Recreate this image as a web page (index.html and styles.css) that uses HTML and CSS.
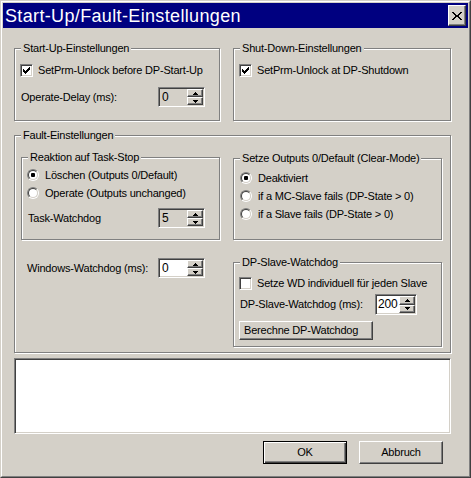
FILE: index.html
```html
<!DOCTYPE html>
<html lang="de">
<head>
<meta charset="utf-8">
<title>Start-Up/Fault-Einstellungen</title>
<link rel="stylesheet" href="styles.css">
</head>
<body>
<div class="window">
  <div class="frame">
    <div class="titlebar">
      <span class="title">Start-Up/Fault-Einstellungen</span>
      <span class="close"><svg width="10" height="8" viewBox="0 0 10 8"><path d="M0 0h2v1H0zM8 0h2v1H8zM1 1h2v1H1zM7 1h2v1H7zM2 2h2v1H2zM6 2h2v1H6zM3 3h4v1H3zM3 4h4v1H3zM2 5h2v1H2zM6 5h2v1H6zM1 6h2v1H1zM7 6h2v1H7zM0 7h2v1H0zM8 7h2v1H8z"/></svg></span>
    </div>
    <div class="content">
      <div class="row-top">
        <div class="group g-startup">
          <div class="legend">Start-Up-Einstellungen</div>
          <div class="check-row">
            <span class="checkbox"><svg class="tick" width="7" height="7" viewBox="0 0 7 7"><path d="M0 2h1v3H0zM1 3h1v3H1zM2 4h1v3H2zM3 3h1v3H3zM4 2h1v3H4zM5 1h1v3H5zM6 0h1v3H6z"/></svg></span>
            <span class="label">SetPrm-Unlock before DP-Start-Up</span>
          </div>
          <div class="spin-row">
            <span class="field-label">Operate-Delay (ms):</span>
            <div class="spin spin-md spin-disabled">
              <span class="spin-value">0</span>
              <span class="spin-btns">
                <span class="spin-btn"><svg width="5" height="3" viewBox="0 0 5 3"><path d="M2 0h1v1H2zM1 1h3v1H1zM0 2h5v1H0z"/></svg></span>
                <span class="spin-btn"><svg width="5" height="3" viewBox="0 0 5 3"><path d="M0 0h5v1H0zM1 1h3v1H1zM2 2h1v1H2z"/></svg></span>
              </span>
            </div>
          </div>
        </div>
        <div class="group g-shutdown">
          <div class="legend">Shut-Down-Einstellungen</div>
          <div class="check-row">
            <span class="checkbox"><svg class="tick" width="7" height="7" viewBox="0 0 7 7"><path d="M0 2h1v3H0zM1 3h1v3H1zM2 4h1v3H2zM3 3h1v3H3zM4 2h1v3H4zM5 1h1v3H5zM6 0h1v3H6z"/></svg></span>
            <span class="label">SetPrm-Unlock at DP-Shutdown</span>
          </div>
        </div>
      </div>

      <div class="group g-fault">
        <div class="legend">Fault-Einstellungen</div>
        <div class="fault-cols">
          <div class="col-left">
            <div class="group g-reaktion">
              <div class="legend">Reaktion auf Task-Stop</div>
              <div class="opt-row">
                <span class="radio"><span class="radio-in"><span class="radio-dot"></span></span></span>
                <span class="label">Löschen (Outputs 0/Default)</span>
              </div>
              <div class="opt-row">
                <span class="radio"><span class="radio-in"></span></span>
                <span class="label">Operate (Outputs unchanged)</span>
              </div>
              <div class="spin-row">
                <span class="field-label">Task-Watchdog</span>
                <div class="spin spin-md spin-disabled">
                  <span class="spin-value">5</span>
                  <span class="spin-btns">
                    <span class="spin-btn"><svg width="5" height="3" viewBox="0 0 5 3"><path d="M2 0h1v1H2zM1 1h3v1H1zM0 2h5v1H0z"/></svg></span>
                    <span class="spin-btn"><svg width="5" height="3" viewBox="0 0 5 3"><path d="M0 0h5v1H0zM1 1h3v1H1zM2 2h1v1H2z"/></svg></span>
                  </span>
                </div>
              </div>
            </div>
            <div class="spin-row win-row">
              <span class="field-label">Windows-Watchdog (ms):</span>
              <div class="spin spin-md">
                <span class="spin-value">0</span>
                <span class="spin-btns">
                  <span class="spin-btn"><svg width="5" height="3" viewBox="0 0 5 3"><path d="M2 0h1v1H2zM1 1h3v1H1zM0 2h5v1H0z"/></svg></span>
                  <span class="spin-btn"><svg width="5" height="3" viewBox="0 0 5 3"><path d="M0 0h5v1H0zM1 1h3v1H1zM2 2h1v1H2z"/></svg></span>
                </span>
              </div>
            </div>
          </div>
          <div class="col-right">
            <div class="group g-setze">
              <div class="legend">Setze Outputs 0/Default (Clear-Mode)</div>
              <div class="opt-row">
                <span class="radio"><span class="radio-in"><span class="radio-dot"></span></span></span>
                <span class="label">Deaktiviert</span>
              </div>
              <div class="opt-row">
                <span class="radio"><span class="radio-in"></span></span>
                <span class="label">if a MC-Slave fails (DP-State &gt; 0)</span>
              </div>
              <div class="opt-row">
                <span class="radio"><span class="radio-in"></span></span>
                <span class="label">if a Slave fails (DP-State &gt; 0)</span>
              </div>
            </div>
            <div class="group g-dpslave">
              <div class="legend">DP-Slave-Watchdog</div>
              <div class="check-row">
                <span class="checkbox"></span>
                <span class="label">Setze WD individuell für jeden Slave</span>
              </div>
              <div class="spin-row">
                <span class="field-label">DP-Slave-Watchdog (ms):</span>
                <div class="spin spin-sm">
                  <span class="spin-value">200</span>
                  <span class="spin-btns">
                    <span class="spin-btn"><svg width="5" height="3" viewBox="0 0 5 3"><path d="M2 0h1v1H2zM1 1h3v1H1zM0 2h5v1H0z"/></svg></span>
                    <span class="spin-btn"><svg width="5" height="3" viewBox="0 0 5 3"><path d="M0 0h5v1H0zM1 1h3v1H1zM2 2h1v1H2z"/></svg></span>
                  </span>
                </div>
              </div>
              <div class="btn btn-calc">Berechne DP-Watchdog</div>
            </div>
          </div>
        </div>
      </div>

      <div class="textarea"></div>

      <div class="button-row">
        <div class="btn btn-default">OK</div>
        <div class="btn">Abbruch</div>
      </div>
    </div>
  </div>
</div>
</body>
</html>
```

FILE: styles.css
```css
* { box-sizing: border-box; }

html, body {
  margin: 0;
  padding: 0;
}

body {
  background: #D4D0C8;
  font-family: "Liberation Sans", Arial, sans-serif;
  font-size: 11px;
  line-height: 13px;
  letter-spacing: -0.2px;
  color: #000;
}

.window {
  width: 471px;
  height: 478px;
  border: 1px solid;
  border-color: #D4D0C8 #404040 #404040 #D4D0C8;
  background: #D4D0C8;
}

.frame {
  height: 100%;
  border: 1px solid;
  border-color: #fff #808080 #808080 #fff;
  padding: 1px;
  display: flex;
  flex-direction: column;
}

.titlebar {
  height: 25px;
  flex: none;
  background: #000080;
  display: flex;
  align-items: center;
  justify-content: space-between;
  padding: 0 2px;
}

.title {
  color: #fff;
  font-size: 18px;
  line-height: 22px;
  letter-spacing: 0.35px;
  white-space: nowrap;
}

.close {
  width: 18px;
  height: 21px;
  background: #D4D0C8;
  border: 1px solid;
  border-color: #fff #404040 #404040 #fff;
  box-shadow: inset -1px -1px 0 #808080;
  display: flex;
  align-items: center;
  justify-content: center;
}

.close svg, .tick, .spin-btn svg { display: block; shape-rendering: crispEdges; }

.content {
  flex: 1;
  padding: 20px 17px 0 11px;
}

/* group boxes */
.group {
  border: 1px solid #808080;
  box-shadow: 1px 1px 0 #fff, inset 1px 1px 0 #fff;
}

.legend {
  width: max-content;
  margin: -7px 0 0 6px;
  padding: 0 2px;
  background: #D4D0C8;
  line-height: 13px;
  white-space: nowrap;
}

.row-top {
  display: flex;
  gap: 13px;
}

.g-startup { width: 206px; height: 73px; }
.g-shutdown { width: 218px; height: 73px; }

.g-fault {
  margin-top: 14px;
  height: 218px;
}

.fault-cols {
  display: flex;
  gap: 13px;
  margin: 15px 0 0 6px;
}

.col-left { width: 199px; }
.col-right { width: 209px; margin-top: 1px; }

.g-reaktion { height: 83px; }
.g-setze { height: 82px; }
.g-dpslave { height: 85px; margin-top: 22px; }

/* rows */
.check-row {
  display: flex;
  align-items: center;
  height: 13px;
  margin: 9px 0 0 5px;
  white-space: nowrap;
}

.g-dpslave .check-row { margin-top: 8px; }

.opt-row {
  display: flex;
  align-items: center;
  height: 18px;
  margin-left: 5px;
  white-space: nowrap;
}

.g-reaktion .legend + .opt-row { margin-top: 2px; }
.g-setze .opt-row { margin-left: 6px; }
.g-setze .legend + .opt-row { margin-top: 4px; }

.spin-row {
  display: flex;
  align-items: center;
  padding-left: 6px;
  white-space: nowrap;
}

.g-startup .spin-row { margin-top: 10px; }
.g-startup .field-label { width: 137px; }

.g-reaktion .spin-row { margin-top: 6px; }
.g-reaktion .field-label { width: 130px; }

.win-row { margin-top: 18px; }
.win-row .field-label { width: 131px; }

.g-dpslave .spin-row { margin-top: 4px; }
.g-dpslave .field-label { width: 135px; }

.field-label { flex: none; }

/* checkbox */
.checkbox {
  width: 13px;
  height: 13px;
  flex: none;
  border: 1px solid;
  border-color: #808080 #fff #fff #808080;
  box-shadow: inset 1px 1px 0 #404040, inset -1px -1px 0 #D4D0C8;
  background: #fff;
  padding: 2px;
  margin-right: 5px;
}

/* radio */
.radio {
  width: 12px;
  height: 12px;
  flex: none;
  display: flex;
  border-radius: 50%;
  border: 1px solid;
  border-color: #808080 #fff #fff #808080;
  margin-right: 6px;
}

.radio-in {
  flex: 1;
  display: flex;
  align-items: center;
  justify-content: center;
  border-radius: 50%;
  border: 1px solid;
  border-color: #404040 #D4D0C8 #D4D0C8 #404040;
  background: #fff;
}

.radio-dot {
  width: 4px;
  height: 4px;
  border-radius: 1px;
  background: #000;
}

/* spin edit */
.spin {
  height: 20px;
  flex: none;
  display: flex;
  border: 1px solid;
  border-color: #808080 #fff #fff #808080;
  box-shadow: inset 1px 1px 0 #404040, inset -1px -1px 0 #D4D0C8;
  background: #fff;
  padding: 1px;
}

.spin-md { width: 47px; }
.spin-sm { width: 42px; height: 21px; }
.spin-disabled { background: #D4D0C8; }

.spin-value {
  flex: 1;
  display: flex;
  align-items: center;
  padding-left: 2px;
  font-size: 12px;
}

.spin-sm .spin-value { padding-left: 1px; }

.spin-btns {
  width: 16px;
  flex: none;
  display: flex;
  flex-direction: column;
}

.spin-btn {
  flex: 1;
  display: flex;
  align-items: center;
  justify-content: center;
  background: #D4D0C8;
  border: 1px solid;
  border-color: #fff #404040 #404040 #fff;
  box-shadow: inset -1px -1px 0 #808080;
}

/* buttons */
.btn {
  width: 84px;
  height: 23px;
  display: flex;
  align-items: center;
  justify-content: center;
  background: #D4D0C8;
  border: 1px solid;
  border-color: #fff #404040 #404040 #fff;
  box-shadow: inset -1px -1px 0 #808080;
  white-space: nowrap;
}

.btn-default {
  border-color: #000;
  box-shadow: inset 1px 1px 0 #fff, inset -1px -1px 0 #404040, inset -2px -2px 0 #808080;
}

.btn-calc {
  width: 134px;
  height: 19px;
  margin: 6px 0 0 5px;
  justify-content: flex-start;
  padding-left: 4px;
}

/* message area */
.textarea {
  margin-top: 5px;
  height: 76px;
  background: #fff;
  border: 1px solid;
  border-color: #808080 #fff #fff #808080;
  box-shadow: inset 1px 1px 0 #404040, inset -1px -1px 0 #D4D0C8;
}

.button-row {
  display: flex;
  justify-content: flex-end;
  gap: 12px;
  margin-top: 7px;
  padding-right: 8px;
}
```
